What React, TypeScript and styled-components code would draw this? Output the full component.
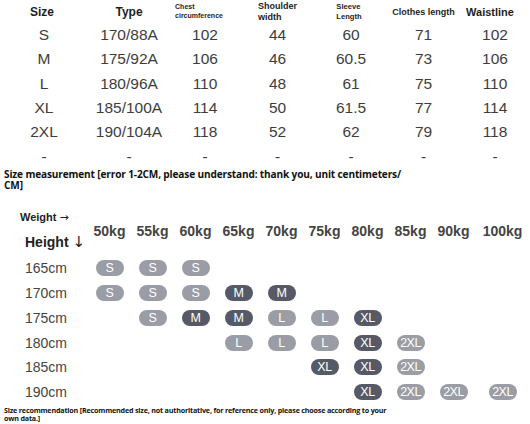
import { Fragment } from 'react';
import styled, { createGlobalStyle } from 'styled-components';

const GlobalStyle = createGlobalStyle`
  html, body {
    margin: 0;
    padding: 0;
    background: #ffffff;
  }
  body {
    font-family: 'Liberation Sans', Arial, sans-serif;
    color: #3d3d3d;
  }
`;

const Page = styled.div`
  width: 530px;
  height: 424px;
  overflow: hidden;
  display: flex;
  flex-direction: column;
`;

const SizeTable = styled.div`
  display: grid;
  grid-template-columns: 88px 82px 70px 75px 72px 73px 70px;
  grid-template-rows: 23px repeat(6, 24.3px);
  align-items: center;
`;

const HeadCell = styled.div<{ $size: number; $dx?: number }>`
  display: flex;
  justify-content: center;
  font-size: ${(p) => p.$size}px;
  font-weight: bold;
  color: #1e1e1e;
  margin-left: ${(p) => p.$dx || 0}px;

  span {
    text-align: left;
    line-height: ${(p) => p.$size + 1.5}px;
  }
`;

const ValueCell = styled.div`
  text-align: center;
  font-size: 15.5px;
  line-height: 24px;
  color: #3d3d3d;
`;

const Note = styled.p`
  margin: 0 0 0 4px;
  font-family: 'Open Sans', 'Liberation Sans', sans-serif;
  font-weight: bold;
  font-size: 10.1px;
  line-height: 11.5px;
  color: #111;
  letter-spacing: -0.15px;
`;

const Chart = styled.div`
  display: grid;
  grid-template-columns: 88px repeat(9, 43px) 55px;
  grid-template-rows: 50px repeat(6, 24.8px);
  align-items: center;
  margin-top: 14px;
`;

const AxisLabels = styled.div`
  display: flex;
  flex-direction: column;
  padding-left: 20px;
  align-self: stretch;
  padding-top: 4px;
`;

const AxisSmall = styled.div`
  font-size: 11px;
  font-weight: bold;
  color: #222;
  line-height: 14px;

  b {
    font-family: 'DejaVu Sans', sans-serif;
    font-weight: normal;
    font-size: 11px;
  }
`;

const AxisBig = styled.div`
  font-size: 14px;
  font-weight: bold;
  color: #222;
  line-height: 20px;
  margin-top: 7px;
  padding-left: 5px;

  b {
    font-family: 'DejaVu Sans', sans-serif;
    font-weight: normal;
    font-size: 15px;
  }
`;

const WeightHead = styled.div`
  text-align: center;
  font-size: 14px;
  font-weight: bold;
  color: #444;
`;

const HeightLabel = styled.div`
  padding-left: 25px;
  font-size: 14px;
  color: #444;
`;

const Slot = styled.div`
  display: flex;
  justify-content: center;
`;

const Pill = styled.div<{ $dark?: boolean }>`
  width: 28px;
  height: 16px;
  border-radius: 8px;
  background: ${(p) => (p.$dark ? '#565a66' : '#9a9da5')};
  color: #fff;
  font-size: 12.5px;
  line-height: 16px;
  text-align: center;
  letter-spacing: -0.5px;
`;

const Footer = styled.p`
  margin: 1px 0 0 4px;
  font-family: 'Open Sans', 'Liberation Sans', sans-serif;
  font-weight: bold;
  font-size: 7.2px;
  line-height: 8.5px;
  color: #111;
  letter-spacing: -0.2px;
`;

const sizes = [
  ['S', '170/88A', '102', '44', '60', '71', '102'],
  ['M', '175/92A', '106', '46', '60.5', '73', '106'],
  ['L', '180/96A', '110', '48', '61', '75', '110'],
  ['XL', '185/100A', '114', '50', '61.5', '77', '114'],
  ['2XL', '190/104A', '118', '52', '62', '79', '118'],
  ['-', '-', '-', '-', '-', '-', '-'],
];

const weights = ['50kg', '55kg', '60kg', '65kg', '70kg', '75kg', '80kg', '85kg', '90kg', '100kg'];

// weight index -> [size, dark]
const chart: { height: string; cells: Record<number, [string, boolean]> }[] = [
  { height: '165cm', cells: { 0: ['S', false], 1: ['S', false], 2: ['S', false] } },
  {
    height: '170cm',
    cells: { 0: ['S', false], 1: ['S', false], 2: ['S', false], 3: ['M', true], 4: ['M', true] },
  },
  {
    height: '175cm',
    cells: { 1: ['S', false], 2: ['M', true], 3: ['M', true], 4: ['L', false], 5: ['L', false], 6: ['XL', true] },
  },
  {
    height: '180cm',
    cells: { 3: ['L', false], 4: ['L', false], 5: ['L', false], 6: ['XL', true], 7: ['2XL', false] },
  },
  { height: '185cm', cells: { 5: ['XL', true], 6: ['XL', true], 7: ['2XL', false] } },
  {
    height: '190cm',
    cells: { 6: ['XL', true], 7: ['2XL', false], 8: ['2XL', false], 9: ['2XL', false] },
  },
];

export default function App() {
  return (
    <Page>
      <GlobalStyle />
      <SizeTable>
        <HeadCell $size={12} $dx={-4}>Size</HeadCell>
        <HeadCell $size={12}>Type</HeadCell>
        <HeadCell $size={7} $dx={-12}>
          <span>
            Chest
            <br />
            circumference
          </span>
        </HeadCell>
        <HeadCell $size={9}>
          <span>
            Shoulder
            <br />
            width
          </span>
        </HeadCell>
        <HeadCell $size={7.6} $dx={-4}>
          <span>
            Sleeve
            <br />
            Length
          </span>
        </HeadCell>
        <HeadCell $size={9}>Clothes length</HeadCell>
        <HeadCell $size={11} $dx={-10}>Waistline</HeadCell>
        {sizes.map((row, r) =>
          row.map((v, c) => <ValueCell key={`${r}-${c}`}>{v}</ValueCell>)
        )}
      </SizeTable>

      <Note>
        Size measurement [error 1-2CM, please understand: thank you, unit centimeters/
        <br />
        CM]
      </Note>

      <Chart>
        <AxisLabels>
          <AxisSmall>
            Weight <b>→</b>
          </AxisSmall>
          <AxisBig>
            Height <b>↓</b>
          </AxisBig>
        </AxisLabels>
        {weights.map((w) => (
          <WeightHead key={w}>{w}</WeightHead>
        ))}
        {chart.map((row) => (
          <Fragment key={row.height}>
            <HeightLabel>{row.height}</HeightLabel>
            {weights.map((w, i) => (
              <Slot key={row.height + w}>
                {row.cells[i] && <Pill $dark={row.cells[i][1]}>{row.cells[i][0]}</Pill>}
              </Slot>
            ))}
          </Fragment>
        ))}
      </Chart>

      <Footer>
        Size recommendation [Recommended size, not authoritative, for reference only, please choose according to your
        <br />
        own data.]
      </Footer>
    </Page>
  );
}
